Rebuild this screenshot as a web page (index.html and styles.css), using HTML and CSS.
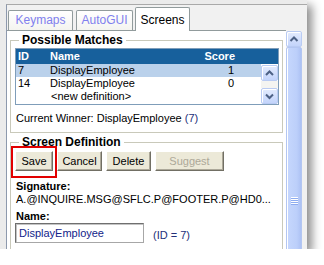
FILE: index.html
```html
<!DOCTYPE html>
<html lang="en">
<head>
  <meta charset="UTF-8" />
  <title>Screens</title>
  <link rel="stylesheet" href="styles.css">
</head>
<body>
  <div class="window">
    <div class="pane">
      <div class="tabs">
        <div class="tab tab-keymaps">Keymaps</div>
        <div class="tab tab-autogui">AutoGUI</div>
        <div class="tab tab-screens active">Screens</div>
      </div>

      <div class="body">
        <div class="content">
          <fieldset class="group">
            <legend>Possible Matches</legend>
            <div class="list">
              <div class="list-head">
                <span>ID</span>
                <span>Name</span>
                <span class="num">Score</span>
              </div>
              <div class="list-body">
                <div class="rows">
                  <div class="row sel"><span>7</span><span>DisplayEmployee</span><span class="num">1</span></div>
                  <div class="row"><span>14</span><span>DisplayEmployee</span><span class="num">0</span></div>
                  <div class="row"><span></span><span class="newdef">&lt;new definition&gt;</span><span></span></div>
                </div>
                <div class="mini-scroll">
                  <div class="sbtn sbtn-first">
                    <svg width="17" height="16" viewBox="0 0 17 16"><polyline points="5,10 8.5,6.5 12,10" fill="none" stroke="#4d6185" stroke-width="2"/></svg>
                  </div>
                  <div class="mini-track"></div>
                  <div class="sbtn">
                    <svg width="17" height="16" viewBox="0 0 17 16"><polyline points="5,6.5 8.5,10 12,6.5" fill="none" stroke="#4d6185" stroke-width="2"/></svg>
                  </div>
                </div>
              </div>
            </div>
            <p class="winner">Current Winner: DisplayEmployee <span class="ref">(7)</span></p>
          </fieldset>

          <fieldset class="group group-def">
            <legend>Screen Definition</legend>
            <div class="buttons">
              <button class="btn btn-save">Save<span class="highlight"></span></button>
              <button class="btn btn-cancel">Cancel</button>
              <button class="btn btn-delete">Delete</button>
              <button class="btn btn-suggest" disabled>Suggest</button>
            </div>
            <div class="label label-sig">Signature:</div>
            <div class="sig">A.@INQUIRE.MSG@SFLC.P@FOOTER.P@HD0...</div>
            <div class="label label-name">Name:</div>
            <div class="name-row">
              <input class="input" type="text" value="DisplayEmployee" />
              <span class="ref">(ID = 7)</span>
            </div>
          </fieldset>
        </div>

        <div class="vscroll">
          <div class="sbtn">
            <svg width="16" height="16" viewBox="0 0 16 16"><polyline points="4.5,10 8,6.5 11.5,10" fill="none" stroke="#4d6185" stroke-width="2"/></svg>
          </div>
          <div class="thumb"><div class="grip"></div></div>
        </div>
      </div>
    </div>
  </div>
</body>
</html>
```

FILE: styles.css
```css
* {
  box-sizing: border-box;
}

body {
  margin: 0;
  background: #fff;
  font-family: "Liberation Sans", Arial, sans-serif;
  font-size: 11px;
  color: #000;
}

.window {
  width: 307px;
  height: 249px;
  overflow: hidden;
  background: #ebebeb;
  padding: 4px 0 0 6px;
  box-shadow: 5px 5px 9px rgba(0, 0, 0, 0.45);
}

.pane {
  height: 100%;
  background: #f1f1f1;
  border-top: 1px solid #a9a9a9;
  border-left: 1px solid #8d99ad;
  display: flex;
  flex-direction: column;
}

/* tabs */
.tabs {
  height: 25px;
  flex: none;
  display: flex;
  align-items: flex-end;
  padding-left: 1px;
}

.tab {
  height: 20px;
  border: 1px solid #919b9c;
  border-bottom: 0;
  border-radius: 2px 2px 0 0;
  background: linear-gradient(#fff, #f4f4f0);
  color: #8080ee;
  text-align: center;
  line-height: 18px;
  font-size: 12px;
}

.tab-keymaps { width: 65px; margin-right: 3px; }
.tab-autogui { width: 57px; margin-right: 2px; }
.tab-screens { width: 55px; }

.tab.active {
  height: 24px;
  margin-bottom: -1px;
  padding-top: 3px;
  background: #fff;
  color: #000;
  position: relative;
  z-index: 1;
}

/* body */
.body {
  flex: 1;
  min-height: 0;
  display: flex;
  padding-right: 5px;
}

.content {
  width: 279px;
  background: #fff;
  border-top: 1px solid #919b9c;
  padding: 0 3px;
}

.group {
  margin: 3px 0 0;
  padding: 0 3px 7px 4px;
  min-width: 0;
  border: 1px solid #c9c9ba;
}

.group legend {
  font-weight: bold;
  font-size: 12px;
  line-height: 13px;
  padding: 0 3px;
  margin-left: 4px;
}

/* list */
.list {
  margin-top: 1px;
  border: 1px solid #7f9db9;
}

.list-head,
.row {
  display: grid;
  grid-template-columns: 32px 1fr 60px;
  padding-left: 2px;
}

.list-head {
  height: 15px;
  line-height: 15px;
  background: #17609c;
  color: #fff;
  font-weight: bold;
  padding-right: 43px;
}

.num {
  text-align: right;
}

.list-body {
  height: 40px;
  display: flex;
}

.rows {
  flex: 1;
}

.row {
  height: 13px;
  line-height: 13px;
  padding-right: 27px;
}

.row.sel {
  background: #bad1eb;
}

.newdef {
  padding-left: 1px;
}

.mini-scroll {
  width: 17px;
  display: flex;
  flex-direction: column;
}

.sbtn {
  height: 16px;
  flex: none;
  border: 1px solid #b9cbf3;
  border-radius: 2px;
  background: linear-gradient(#e3ebfd, #c3d4fb);
  box-shadow: inset 1px 1px #fff;
  display: flex;
  align-items: center;
  justify-content: center;
}

.sbtn svg {
  display: block;
  flex: none;
}

.sbtn-first {
  margin-top: 1px;
}

.mini-track {
  flex: 1;
  background: #f4f4f1;
}

.winner {
  margin: 7px 0 0 1px;
  line-height: 13px;
}

.ref {
  color: #22307a;
}

/* screen definition */
.group-def {
  padding-bottom: 20px;
}

.buttons {
  display: flex;
  gap: 4px;
  margin-top: 2px;
}

.btn {
  height: 20px;
  padding: 0;
  font-family: inherit;
  font-size: 11px;
  color: #000;
  background: #ece9d8;
  border: 1px solid;
  border-color: #fff #716f64 #716f64 #fff;
  box-shadow: inset -1px -1px #aca899;
}

.btn-save { width: 38px; position: relative; }
.btn-cancel { width: 45px; }
.btn-delete { width: 45px; }
.btn-suggest { width: 69px; color: #aca899; }

.highlight {
  position: absolute;
  left: -5px;
  top: -6px;
  right: -5px;
  bottom: -8px;
  border: 2px solid #e20000;
}

.label {
  font-weight: bold;
  line-height: 13px;
}

.label-sig {
  margin-top: 9px;
  padding-left: 1px;
}

.sig {
  line-height: 13px;
  padding-left: 1px;
}

.label-name {
  margin-top: 4px;
  padding-left: 1px;
}

.name-row {
  display: flex;
  align-items: center;
}

.input {
  width: 129px;
  height: 20px;
  margin: 0;
  padding: 0 0 0 3px;
  font-family: inherit;
  font-size: 11px;
  color: #12238a;
  border: 1px solid #a7a7a7;
  border-top-color: #6f6f6f;
  border-left-color: #6f6f6f;
  box-shadow: inset 1px 1px #c4c4c4;
}

.name-row .ref {
  margin: 3px 0 0 9px;
}

/* outer scrollbar */
.vscroll {
  width: 16px;
  margin-top: 1px;
  display: flex;
  flex-direction: column;
}

.thumb {
  height: 400px;
  flex: none;
  border: 1px solid #b3c6f2;
  border-radius: 2px;
  background: linear-gradient(90deg, #c6d7fd, #bccffa 70%, #adc2f4);
  box-shadow: inset 1px 0 #fff;
  padding-top: 149px;
}

.grip {
  width: 7px;
  height: 8px;
  margin: 0 auto;
  background: repeating-linear-gradient(#fff 0 1px, #8eacf0 1px 2px);
}
```
